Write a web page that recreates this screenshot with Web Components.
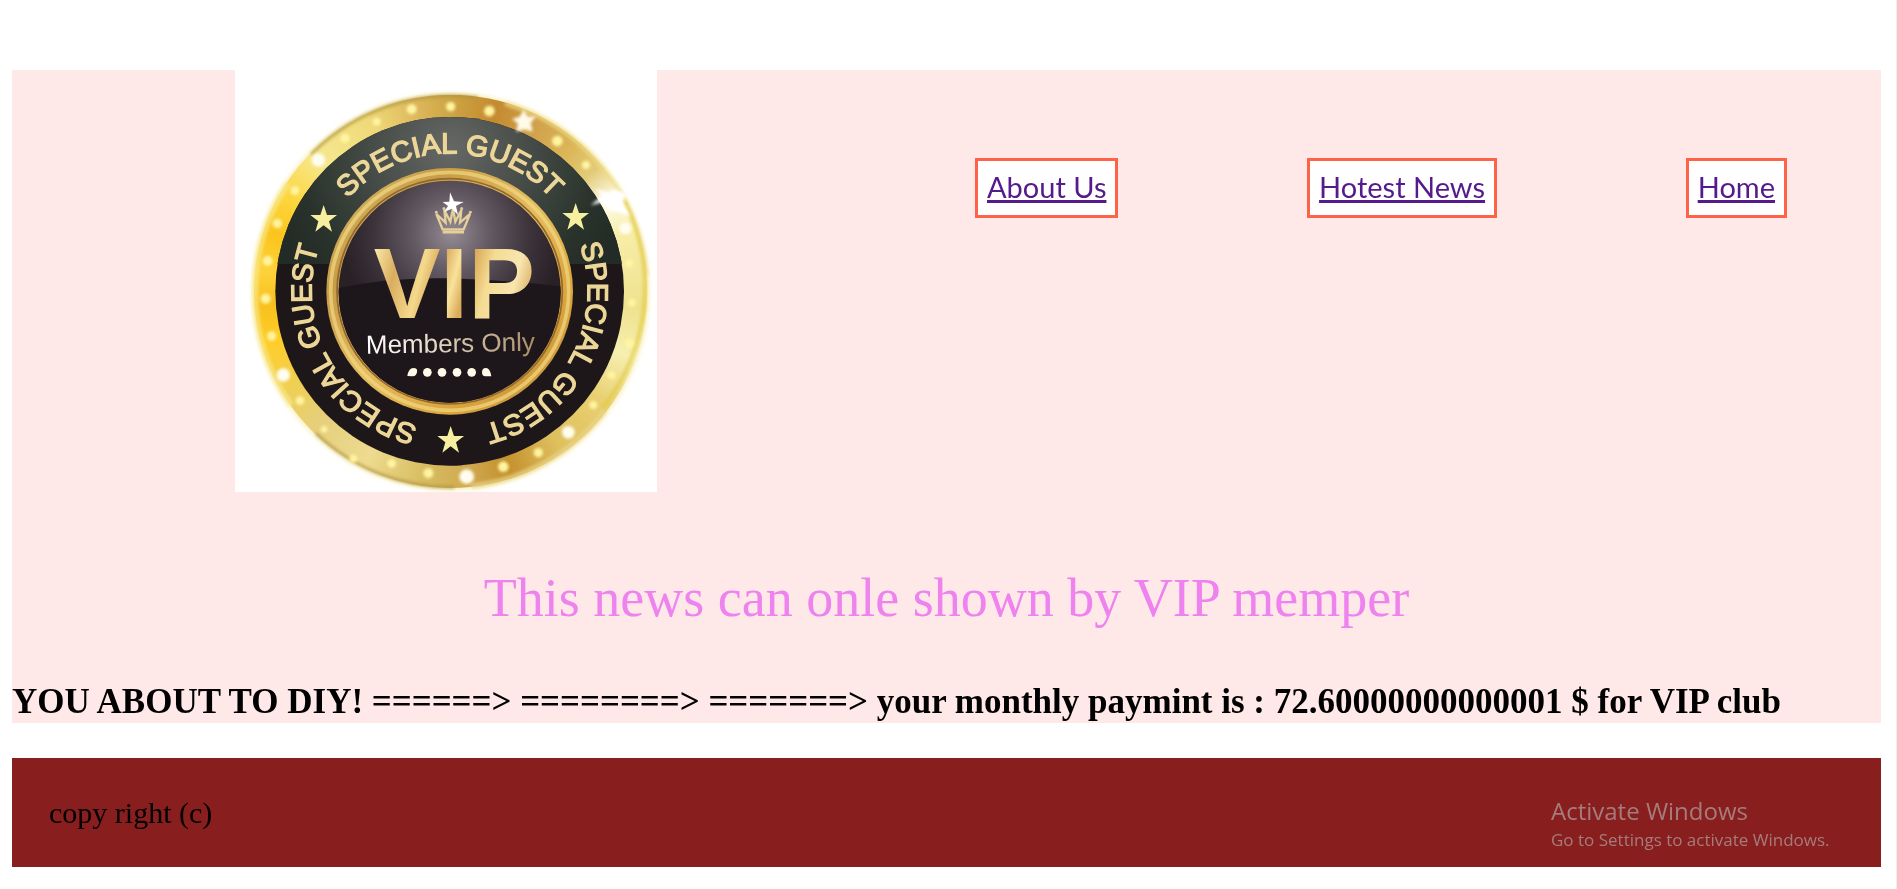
<!DOCTYPE html>
<html lang="en">
<head>
<meta charset="utf-8">
<title>VIP club</title>
<style>
body { margin: 0; background: #fff; font-family: "Liberation Serif", "Times New Roman", serif; color: #000; }
</style>
</head>
<body>
<vip-page>
  <vip-header>
    <vip-seal slot="logo"></vip-seal>
    <vip-nav slot="nav">
      <nav-link href="#about">About Us</nav-link>
      <nav-link href="#news">Hotest News</nav-link>
      <nav-link href="#home">Home</nav-link>
    </vip-nav>
    <vip-title slot="title">This news can onle shown by VIP memper</vip-title>
    <vip-payment slot="payment">YOU ABOUT TO DIY! ======&gt; ========&gt; =======&gt; your monthly paymint is : 72.60000000000001 $ for VIP club</vip-payment>
  </vip-header>
  <vip-footer>copy right (c)</vip-footer>
</vip-page>
<activation-notice></activation-notice>

<script>
function define(name, html, setup) {
  customElements.define(name, class extends HTMLElement {
    constructor() {
      super();
      this.attachShadow({ mode: "open" }).innerHTML = html;
    }
    connectedCallback() { if (setup) setup(this, this.shadowRoot); }
  });
}

define("vip-page", `
<style>
:host { display: block; box-sizing: border-box; min-height: 100vh; padding: 70px 15px 20px 12px; border-right: 1px solid #ededed; }
</style><slot></slot>`);

define("vip-header", `
<style>
:host { display: block; background: #ffe9e8; }
.top { display: flex; align-items: flex-start; justify-content: space-between; padding: 0 94px 0 223px; }
</style>
<header>
  <div class="top"><slot name="logo"></slot><slot name="nav"></slot></div>
  <slot name="title"></slot>
  <slot name="payment"></slot>
</header>`);

define("vip-nav", `
<style>
:host { display: block; flex: 0 1 812px; margin-top: 88px; }
nav { display: flex; justify-content: space-between; }
</style><nav><slot></slot></nav>`);

define("nav-link", `
<style>
:host { display: block; }
a { display: block; padding: 8px 9px 10px; border: 3px solid tomato; background: #fff; color: #551a8b;
    font: 29px/36px Lato, "Open Sans", sans-serif; text-decoration: underline; text-decoration-thickness: 3px;
    text-underline-offset: 2px; text-decoration-skip-ink: none; white-space: nowrap; }
</style><a><slot></slot></a>`, (host, root) => {
  root.querySelector("a").setAttribute("href", host.getAttribute("href"));
});

define("vip-title", `
<style>
:host { display: block; padding: 75px 0 52px; }
p { margin: 0; text-align: center; font-size: 54px; line-height: 62px; color: violet; }
</style><p><slot></slot></p>`);

define("vip-payment", `
<style>
:host { display: block; }
h2 { margin: 0; font-size: 35px; line-height: 42px; font-weight: bold; }
</style><h2><slot></slot></h2>`);

define("vip-footer", `
<style>
:host { display: block; margin-top: 35px; padding: 37px; background: #891e1e; font-size: 30px; line-height: 35px; }
</style><footer><slot></slot></footer>`);

define("activation-notice", `
<style>
:host { position: absolute; right: 61px; top: 795px; width: 285px; color: #a57c7c; font-family: "Open Sans", sans-serif; white-space: nowrap; }
p { margin: 0; }
.head { font-size: 24px; line-height: 32px; }
.sub { font-size: 17px; line-height: 26px; }
</style>
<p class="head">Activate Windows</p><p class="sub">Go to Settings to activate Windows.</p>`);

define("vip-seal", `
<style>
:host { display: block; width: 422px; background: #fff; }
svg { display: block; width: 100%; }
.rim { width: 1180px; height: 1180px; border-radius: 50%;
  background: conic-gradient(#cda545 0deg, #c48a30 14deg, #cf9f4a 26deg, #dcb658 40deg, #e2cb78 50deg, #fffce8 60deg, #f7eda8 72deg,
   #efe28e 95deg, #f6efb0 110deg, #e8d070 126deg, #dfbf5e 145deg, #c4902c 162deg, #d0a850 174deg, #d8bc60 188deg, #eedb90 206deg,
   #e5cf7c 225deg, #f0cf50 240deg, #ffcd28 255deg, #f8c01c 266deg, #fdd23a 276deg, #fbc41c 288deg, #fdd63e 300deg, #f6e890 315deg,
   #efd978 335deg, #dcb65a 350deg, #cda545 360deg); }
text { font-family: "Liberation Sans", Arial, sans-serif; }
.ring { font-size: 87px; fill: #ecd798; stroke: #ecd798; stroke-width: 4px; text-anchor: middle; }
.vip { font-size: 300px; font-weight: bold; }
.members { font-size: 78px; }
.edge { fill: none; stroke-linecap: round; opacity: .7; }
</style>
<svg viewBox="45 30 1266 1266" role="img" aria-label="VIP members only seal">
  <defs>
    <filter id="soft" x="-20%" y="-20%" width="140%" height="140%"><feGaussianBlur stdDeviation="9"/></filter>
    <filter id="slight" x="-40%" y="-40%" width="180%" height="180%"><feGaussianBlur stdDeviation="4"/></filter>
    <radialGradient id="band" gradientUnits="userSpaceOnUse" cx="690" cy="270" r="560">
      <stop offset="0" stop-color="#666865"/><stop offset=".45" stop-color="#444a45"/><stop offset=".8" stop-color="#29332c"/><stop offset="1" stop-color="#222b25"/>
    </radialGradient>
    <radialGradient id="glass" gradientUnits="userSpaceOnUse" cx="695" cy="520" r="330">
      <stop offset="0" stop-color="#948b93"/><stop offset=".35" stop-color="#625962"/><stop offset=".7" stop-color="#3d343c"/><stop offset="1" stop-color="#292126"/>
    </radialGradient>
    <linearGradient id="inner" x1="0" y1="0" x2="1" y2="1">
      <stop offset="0" stop-color="#d8bd70"/><stop offset=".25" stop-color="#c79c48"/><stop offset=".5" stop-color="#e5bd60"/><stop offset=".75" stop-color="#d9a43c"/><stop offset="1" stop-color="#bd9044"/>
    </linearGradient>
    <linearGradient id="vipGold" gradientUnits="userSpaceOnUse" x1="460" y1="600" x2="940" y2="730">
      <stop offset="0" stop-color="#f8e6a2"/><stop offset=".14" stop-color="#d9ad60"/><stop offset=".3" stop-color="#f5d98c"/><stop offset=".4" stop-color="#d6a558"/>
      <stop offset=".5" stop-color="#f9e29a"/><stop offset=".58" stop-color="#d9a957"/><stop offset=".7" stop-color="#f5dc94"/><stop offset=".86" stop-color="#f8e6b0"/><stop offset="1" stop-color="#d3a050"/>
    </linearGradient>
    <linearGradient id="fade" x1="0" y1="0" x2="1" y2="0">
      <stop offset="0" stop-color="#fff"/><stop offset=".35" stop-color="#e8ddce"/><stop offset="1" stop-color="#a98d67"/>
    </linearGradient>
    <clipPath id="bandTop"><rect x="150" y="150" width="1080" height="462"/></clipPath>
    <clipPath id="innerClip"><circle cx="689" cy="695" r="333"/></clipPath>
    <path id="arc" d="M275 694A414 414 0 0 1 1103 694"/>
    <path id="star" d="M0-42L10-12L40-12L16 7L25 38L0 19L-25 38L-16 7L-40-12L-10-12Z" fill="#f6efa0"/>
    <path id="spark" d="M0-38L11-18L36-18L20 2L26 28L2 21L-24 28L-18 4L-36-10L-14-16Z" fill="#fffbe8"/>
  </defs>
  <circle cx="692" cy="695" r="590" fill="#f4e58a" filter="url(#soft)"/>
  <foreignObject x="102" y="104" width="1180" height="1180"><div class="rim"></div></foreignObject>
  <g filter="url(#slight)">
    <path class="edge" d="M276 280A588 588 0 0 1 770 112" stroke="#ad923f" stroke-width="9"/>
    <path class="edge" d="M860 132A588 588 0 0 1 1278 640" stroke="#f0dd88" stroke-width="14"/>
    <path class="edge" d="M1215 425A580 580 0 0 1 1150 1040" stroke="#dfc83a" stroke-width="10"/>
    <path class="edge" d="M1150 1058A588 588 0 0 1 760 1278" stroke="#ead58b" stroke-width="16"/>
    <path class="edge" d="M700 1282A588 588 0 0 1 290 1122" stroke="#ad9240" stroke-width="9"/>
    <path class="edge" d="M210 1030A588 588 0 0 1 200 375" stroke="#f8e88c" stroke-width="18"/>
  </g>
  <g id="dots" filter="url(#slight)"></g>
  <circle cx="689" cy="694" r="523" fill="#1e171a"/>
  <circle cx="689" cy="694" r="523" fill="url(#band)" clip-path="url(#bandTop)"/>
  <circle cx="689" cy="694" r="370" fill="url(#inner)"/>
  <circle cx="689" cy="694" r="357" fill="none" stroke="#f2d982" stroke-width="11" opacity=".7"/>
  <circle cx="689" cy="694" r="338" fill="none" stroke="#92682c" stroke-width="5"/>
  <circle cx="689" cy="695" r="333" fill="url(#glass)"/>
  <path d="M340 688Q500 650 690 655T1040 682V1040H340Z" fill="#1d161b" clip-path="url(#innerClip)"/>
  <text class="ring"><textPath href="#arc" startOffset="50%">SPECIAL GUEST</textPath></text>
  <text class="ring" transform="rotate(118 689 694)"><textPath href="#arc" startOffset="50%">SPECIAL GUEST</textPath></text>
  <text class="ring" transform="rotate(241 689 694)"><textPath href="#arc" startOffset="50%">SPECIAL GUEST</textPath></text>
  <use href="#star" x="311" y="477"/><use href="#star" x="1067" y="471"/><use href="#star" x="692" y="1140"/>
  <g fill="#e5d09c" stroke="#e5d09c">
    <path d="M668 508L649 462L677 488L673 450L691 485L699 446L706 485L724 450L720 488L750 462L731 508Z" fill="none" stroke-width="7"/>
    <path d="M668 516H732" stroke-width="9"/>
    <circle cx="649" cy="457" r="4"/><circle cx="672" cy="446" r="4"/><circle cx="725" cy="446" r="4"/><circle cx="751" cy="457" r="4"/>
  </g>
  <path d="M690 397L702 424L731 426L708 438L714 465L696 446L672 456L684 438L668 426L688 425Z" fill="#fff"/>
  <text class="vip" x="461" y="775" fill="url(#vipGold)">VIP</text>
  <text class="members" x="438" y="881" fill="url(#fade)" transform="rotate(-1 438 881)">Members Only</text>
  <g fill="#fffbe8"><path d="M562 948Q566 924 580 924T591 937T577 949Z"/><circle cx="622" cy="937" r="13"/><circle cx="666" cy="937" r="13"/><circle cx="711" cy="937" r="13"/><circle cx="755" cy="937" r="13"/><path d="M814 949Q810 924 798 924T786 937T798 949Z"/></g>
  <g filter="url(#slight)"><path d="M1112 436L1145 408L1128 388L1165 397L1185 388L1222 402L1205 425L1232 470L1192 455L1165 450L1148 426Z" fill="#fff"/><use href="#spark" x="912" y="187"/></g>
</svg>`, (host, root) => {
  const bulbs = [[575,148,15],[692,140,14],[808,153,16],[1012,243,16],[1098,315,13],[1216,505,18],[1228,610,12],[1236,728,12],[1228,850,15],
    [1175,945,12],[1120,1035,12],[1045,1117,19],[955,1178,14],[850,1220,16],[740,1250,22],[625,1240,15],[515,1210,13],[400,1196,12],
    [312,1108,10],[240,1022,13],[190,945,20],[155,828,14],[137,716,15],[143,603,15],[172,490,14],[225,392,13],[295,300,20],[375,235,14],[470,185,12]];
  root.getElementById("dots").innerHTML = bulbs.map(([x, y, r]) => `<circle cx="${x}" cy="${y}" r="${r}" fill="${r > 17 ? "#fffdf0" : "#fff4a0"}"/>`).join("");
});
</script>
</body>
</html>
